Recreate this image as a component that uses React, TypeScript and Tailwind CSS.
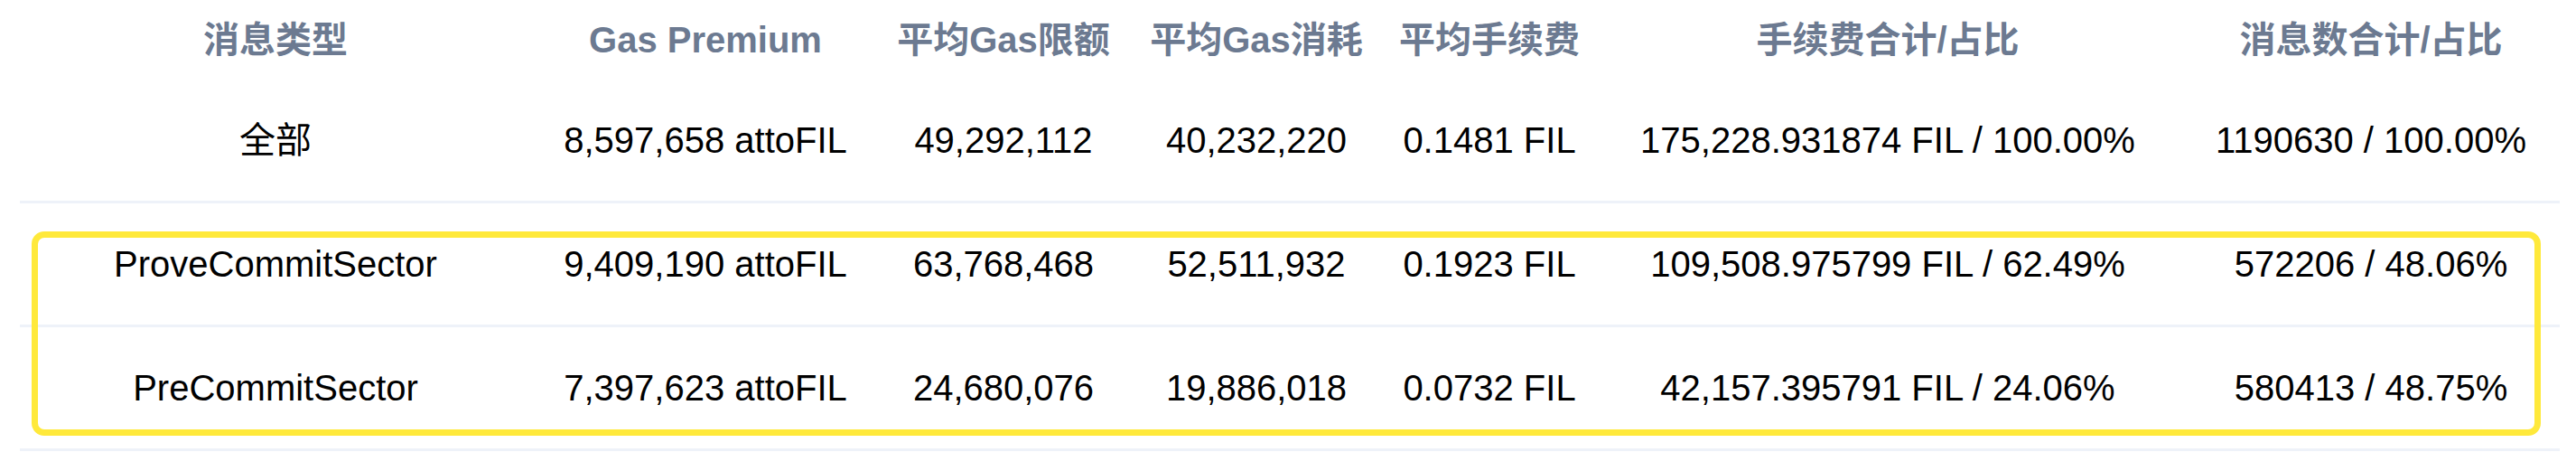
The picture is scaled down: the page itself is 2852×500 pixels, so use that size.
import React from 'react';

const headers = ['消息类型', 'Gas Premium', '平均Gas限额', '平均Gas消耗', '平均手续费', '手续费合计/占比', '消息数合计/占比'];

const rows = [
  ['全部', '8,597,658 attoFIL', '49,292,112', '40,232,220', '0.1481 FIL', '175,228.931874 FIL / 100.00%', '1190630 / 100.00%'],
  ['ProveCommitSector', '9,409,190 attoFIL', '63,768,468', '52,511,932', '0.1923 FIL', '109,508.975799 FIL / 62.49%', '572206 / 48.06%'],
  ['PreCommitSector', '7,397,623 attoFIL', '24,680,076', '19,886,018', '0.0732 FIL', '42,157.395791 FIL / 24.06%', '580413 / 48.75%'],
];

const grid = 'grid grid-cols-[566px_386px_274px_286px_230px_652px_418px]';

export default function App() {
  return (
    <div className="relative w-[2852px] h-[500px] bg-white pl-[22px] pr-[18px] font-['Liberation_Sans','Noto_Sans_CJK_SC',sans-serif]">
      <div className={`${grid} h-[88px] items-center`}>
        {headers.map((h) => (
          <div key={h} className="text-center text-[40px] font-bold text-[#6c7a91] whitespace-nowrap">
            {h}
          </div>
        ))}
      </div>

      {rows.map((row, i) => (
        <div key={i} className={`${grid} h-[137px] items-center border-b-[3px] border-[#eef2f9]`}>
          {row.map((cell, j) => (
            <div key={j} className="text-center text-[40px] text-black whitespace-nowrap">
              {cell}
            </div>
          ))}
        </div>
      ))}

      {/* highlight box drawn over the two sector rows */}
      <div className="absolute left-[35px] top-[256px] w-[2778px] h-[226px] border-[7px] border-[#ffe93b] rounded-[14px] pointer-events-none" />
    </div>
  );
}
